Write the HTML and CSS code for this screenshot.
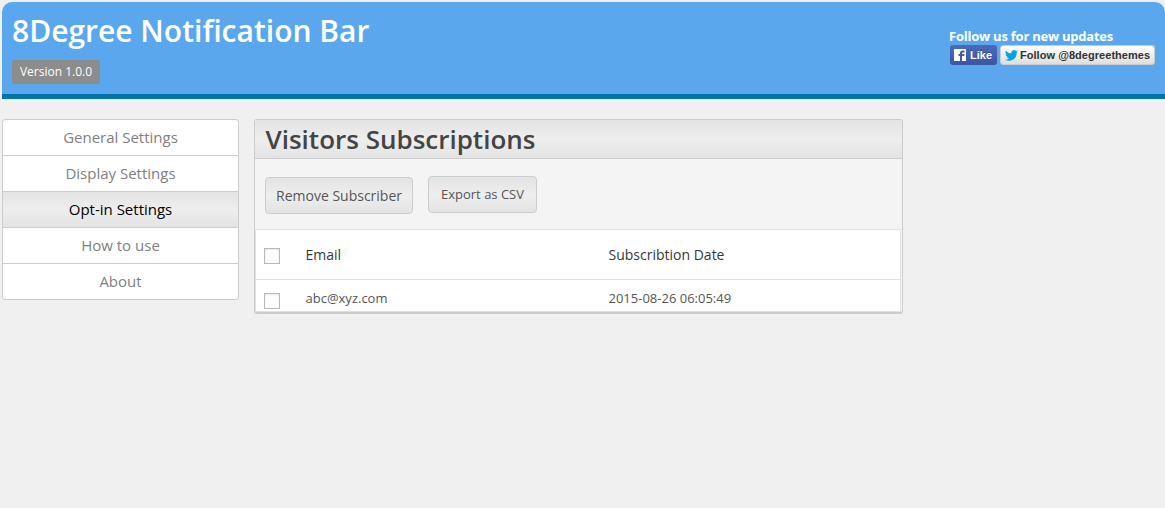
FILE: index.html
```html
<!DOCTYPE html>
<html lang="en">
<head>
<meta charset="utf-8">
<title>8Degree Notification Bar</title>
<link rel="stylesheet" href="styles.css">
</head>
<body>
<header class="banner">
  <div class="brand">
    <h1 class="brand-title">8Degree Notification Bar</h1>
    <span class="version">Version 1.0.0</span>
  </div>
  <div class="social">
    <p class="social-title">Follow us for new updates</p>
    <div class="social-buttons">
      <a class="like">
        <svg class="fb-icon" viewBox="0 0 12 12"><rect width="12" height="12" rx=".6" fill="#fff"/><path d="M6 12V7H4.500V5H6V4C6 2.400 7 1.500 8.500 1.500H10.500V3.500H9.200C8.400 3.500 8 3.800 8 4.400V5H10.500L10.200 7H8V12Z" fill="#4259a8"/></svg>
        <span>Like</span>
      </a>
      <a class="follow">
        <svg class="tw-icon" viewBox="0 0 24 20"><path d="M24 2.400a9.800 9.800 0 0 1-2.800.8A4.900 4.900 0 0 0 23.300.5a9.900 9.900 0 0 1-3.100 1.200A4.900 4.900 0 0 0 11.800 6.200 14 14 0 0 1 1.700 1 4.900 4.900 0 0 0 3.200 7.600 4.900 4.900 0 0 1 1 7a4.900 4.900 0 0 0 3.900 4.900 4.900 4.900 0 0 1-2.200.1 4.900 4.900 0 0 0 4.600 3.400A9.900 9.900 0 0 1 0 17.500 14 14 0 0 0 21.500 5A10 10 0 0 0 24 2.400Z" fill="#00a4e8"/></svg>
        <span>Follow @8degreethemes</span>
      </a>
    </div>
  </div>
</header>
<div class="layout">
  <nav class="menu">
    <a class="menu-item">General Settings</a>
    <a class="menu-item">Display Settings</a>
    <a class="menu-item active">Opt-in Settings</a>
    <a class="menu-item">How to use</a>
    <a class="menu-item">About</a>
  </nav>
  <main class="panel">
    <h2 class="panel-title">Visitors Subscriptions</h2>
    <div class="actions">
      <button class="button remove">Remove Subscriber</button>
      <button class="button export">Export as CSV</button>
    </div>
    <div class="table">
      <div class="row head">
        <span class="check"></span>
        <span class="email">Email</span>
        <span class="date">Subscribtion Date</span>
      </div>
      <div class="row entry">
        <span class="check"></span>
        <span class="email">abc@xyz.com</span>
        <span class="date">2015-08-26 06:05:49</span>
      </div>
    </div>
  </main>
</div>
</body>
</html>
```
FILE: styles.css
```css
* { box-sizing: border-box; }
body {
  margin: 0;
  padding: 2px 0 0 2px;
  height: 508px;
  overflow: hidden;
  background: #f0f0f0;
  font-family: "Open Sans", sans-serif;
  color: #444;
}
.banner {
  display: flex;
  justify-content: space-between;
  height: 97px;
  padding: 9px 9px 0 10px;
  background: #5ba7ee;
  border-bottom: 5px solid #0073aa;
  border-radius: 10px 10px 0 0;
}
.brand-title {
  margin: 0;
  font-size: 30px;
  line-height: 40px;
  font-weight: 600;
  color: #fff;
}
.version {
  display: block;
  width: 88px;
  height: 24px;
  margin-top: 9px;
  border-radius: 3px;
  background: #8c8c8c;
  color: #fff;
  font-size: 12px;
  line-height: 24px;
  text-align: center;
}
.social { width: 207px; padding-top: 16px; }
.social-title {
  margin: 0;
  font-size: 13px;
  line-height: 18px;
  font-weight: 700;
  letter-spacing: -0.23px;
  color: #fff;
  white-space: nowrap;
}
.social-buttons {
  display: flex;
  gap: 3px;
  padding-left: 1px;
  font: bold 11px/18px "Liberation Sans", sans-serif;
}
.like {
  display: flex;
  align-items: center;
  gap: 4px;
  width: 47px;
  height: 20px;
  padding-left: 4px;
  border-radius: 3px;
  background: linear-gradient(#4c69ba, #3b55a0);
  color: #fff;
  text-shadow: 0 -1px 0 #354c8c;
}
.fb-icon { width: 12px; height: 12px; }
.follow {
  display: flex;
  align-items: center;
  gap: 2px;
  width: 155px;
  height: 20px;
  padding-left: 4px;
  border: 1px solid #ccc;
  border-radius: 3px;
  background: linear-gradient(#fff, #dedede);
  color: #333;
  letter-spacing: 0.04px;
  white-space: nowrap;
}
.tw-icon { width: 13px; height: 11px; }
.layout {
  display: flex;
  align-items: flex-start;
  gap: 15px;
  padding-top: 20px;
}
.menu {
  width: 237px;
  border: 1px solid #ccc;
  border-radius: 3px;
  background: #fff;
  overflow: hidden;
}
.menu-item {
  display: block;
  height: 36px;
  border-bottom: 1px solid #ccc;
  color: #808080;
  font-size: 15px;
  line-height: 35px;
  text-align: center;
}
.menu-item:last-child { height: 35px; border-bottom: 0; }
.active {
  color: #000;
  background: linear-gradient(#e3e3e3, #eee 50%, #e3e3e3);
}
.panel {
  width: 649px;
  height: 195px;
  border: 1px solid #ccc;
  border-bottom-width: 2px;
  border-radius: 3px;
  background: #f4f4f4;
}
.panel-title {
  height: 39px;
  margin: 0;
  padding-left: 10.5px;
  border-bottom: 1px solid #ccc;
  background: linear-gradient(#e3e3e3, #eee 50%, #e3e3e3);
  font-size: 26px;
  line-height: 39px;
  font-weight: 600;
}
.actions {
  display: flex;
  align-items: flex-start;
  gap: 15px;
  height: 70px;
  padding: 17px 0 0 10px;
}
.button {
  height: 37px;
  padding: 0;
  border: 1px solid #ccc;
  border-radius: 4px;
  background: linear-gradient(#e3e3e3, #eee 50%, #e3e3e3);
  color: #555;
  font-family: inherit;
}
.remove { width: 148px; margin-top: 1px; font-size: 14px; }
.export { width: 109px; padding-bottom: 2px; font-size: 13px; }
.table {
  width: 646px;
  height: 83px;
  border: 1px solid #e1e1e1;
  background: #fff;
}
.row {
  display: grid;
  grid-template-columns: 41.5px 303px 1fr;
  padding-left: 8px;
}
.head {
  height: 50px;
  border-bottom: 1px solid #e1e1e1;
  color: #32373c;
  font-size: 14px;
  line-height: 49px;
}
.entry { color: #555; font-size: 13px; line-height: 37px; }
.check {
  width: 16px;
  height: 16px;
  margin-top: 18px;
  border: 1px solid #b4b9be;
  background: #fff;
  box-shadow: inset 0 1px 2px rgba(0, 0, 0, .1);
}
.entry .check { margin-top: 13px; }
```
